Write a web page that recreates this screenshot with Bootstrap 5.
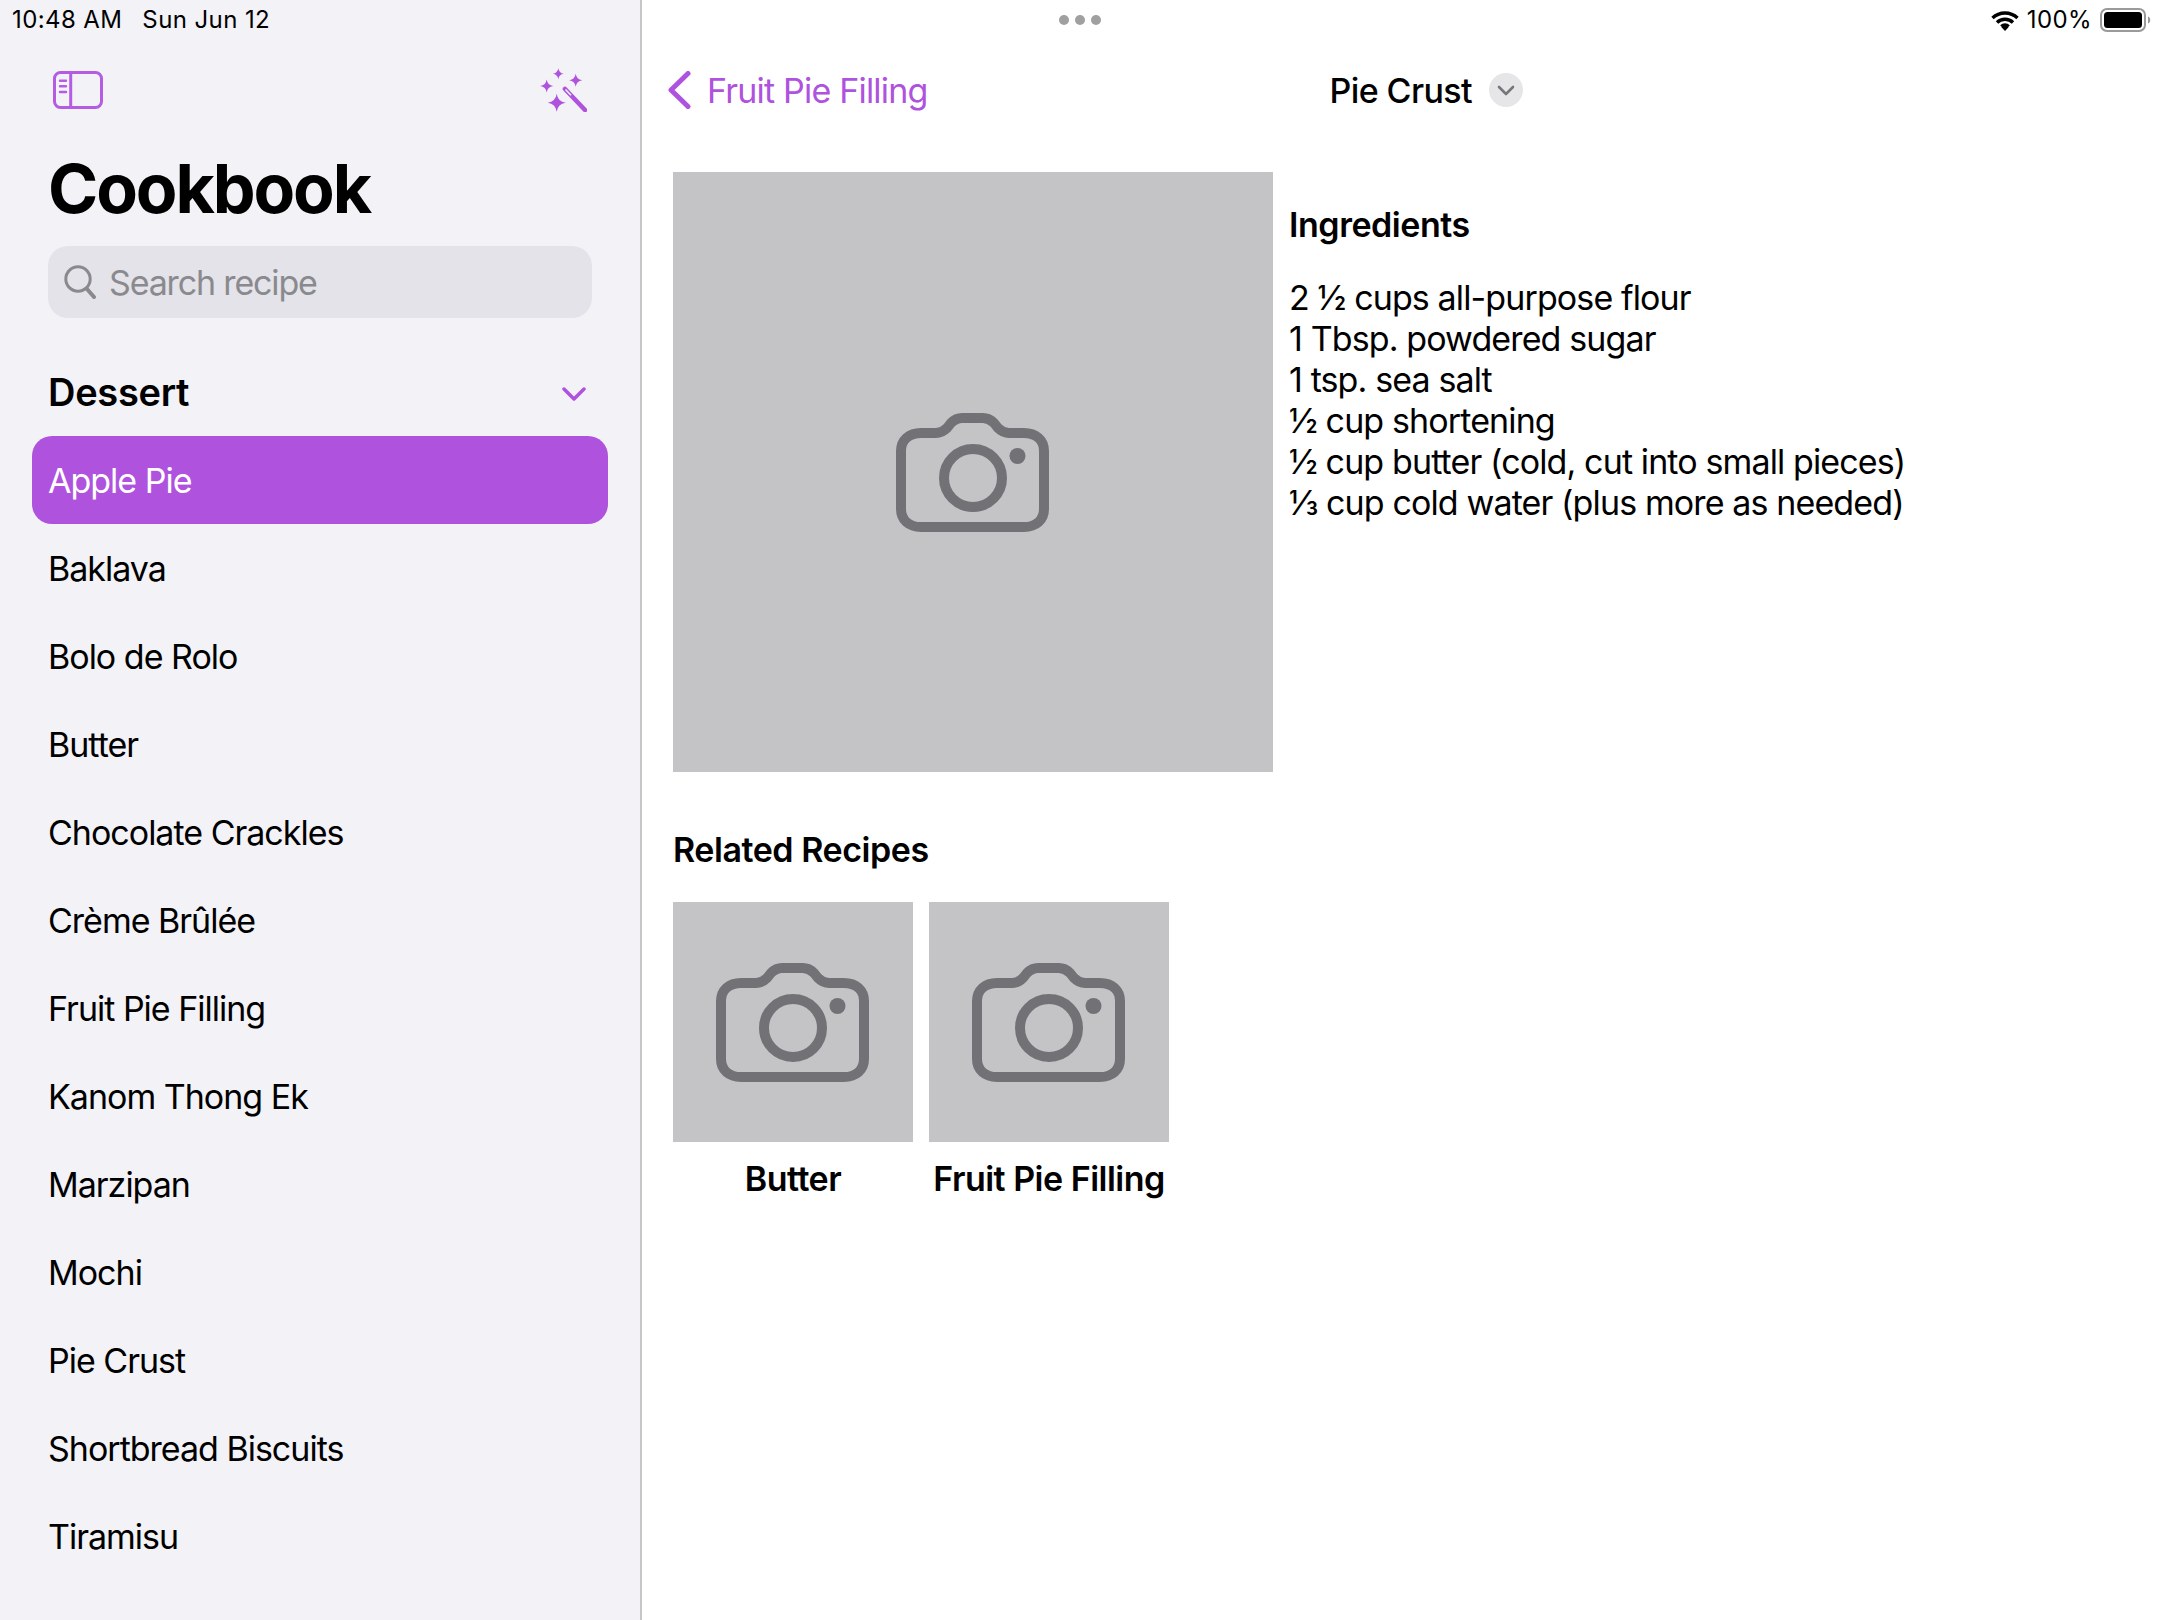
<!DOCTYPE html>
<html lang="en">
<head>
<meta charset="utf-8">
<title>Cookbook</title>
<link href="https://cdn.jsdelivr.net/npm/bootstrap@5.3.0/dist/css/bootstrap.min.css" rel="stylesheet">
<style>
html,body{height:1620px;overflow:hidden;background:#fff}
body{font-family:Inter,"Liberation Sans",sans-serif;color:#000;font-size:34px;line-height:41px;letter-spacing:-.8px}
.ck-side{width:642px;height:1620px;background:#f2f2f7;border-right:2px solid #c6c6c8;flex:none}
.ck-stat{height:40px;font-size:24px;line-height:40px;letter-spacing:.4px}
.ck-time{padding-left:12px;gap:20px}
.ck-tools{height:100px;padding:0 53px}
.ck-title{font-size:68px;line-height:96px;height:106px;font-weight:700;margin:0;padding-left:48px;letter-spacing:-2.1px}
.ck-search{height:72px;margin:0 48px;background:#e3e3e9;border-radius:20px;padding-left:16px;gap:13px;color:#8a8a8e;letter-spacing:-1.15px}
.ck-sect{height:118px;padding:42px 54px 0 48px;align-items:flex-start}
.ck-sect h2{font-size:38px;line-height:64px;margin:0;font-weight:600;letter-spacing:-.3px}
.ck-sect svg{margin-top:27px}
.ck-list{margin:0 32px}
.ck-row{height:88px;background:transparent;border:0;padding:0 16px;display:flex;align-items:center;color:#000;border-radius:20px!important;letter-spacing:-1px}
.ck-row.active{background:#af52de;color:#fff}
.ck-main{min-width:0}
.ck-stat-main{position:relative;padding-right:8px;gap:8px}
.ck-dots{gap:6px;position:absolute;left:417px;top:15px}
.ck-dots i{width:10px;height:10px;border-radius:50%;background:#a0a0a0;display:block}
.ck-nav{height:132px;padding:0 0 32px 26px;color:#af52de}
.ck-back{width:39px}
.ck-navtitle{color:#000;font-weight:500;margin-left:402px;letter-spacing:-.6px}
.ck-disc{width:34px;height:34px;background:#e6e6e8;border-radius:50%;margin-left:17px}
.ck-body{padding-left:31px}
.ck-photo{width:600px;height:600px;background:#c4c4c6;flex:none}
.ck-thumb{width:240px;height:240px;background:#c4c4c6}
.ck-cam{margin-right:1px}
.ck-ingr{padding:32px 0 0 16px}
.ck-h{font-size:34px;line-height:41px;font-weight:600;margin:0;letter-spacing:-.45px}
.ck-lines{margin-top:32px;white-space:nowrap;letter-spacing:-.88px}
.ck-related{height:130px;padding-top:57px}
.ck-tile{width:240px}
.ck-tile-label{font-weight:600;text-align:center;margin-top:16px;white-space:nowrap;letter-spacing:-.5px}
.ck-tiles{gap:16px}
</style>
</head>
<body class="m-0">
<div class="d-flex">
  <aside class="ck-side d-flex flex-column">
    <div class="ck-stat ck-time d-flex"><span>10:48 AM</span><span>Sun Jun 12</span></div>
    <div class="ck-tools d-flex justify-content-between align-items-center">
      <svg width="50" height="40" viewBox="0 0 50 40" fill="none" stroke="#b45ce2" stroke-width="3"><rect x="1.500" y="2.500" width="47" height="35" rx="6"/><path d="M17.700 2.500V37.500"/><path d="M7 10.700h6M7 16.300h6M7 22h6" stroke-width="2.400" stroke-linecap="round"/></svg>
      <svg width="47" height="44" viewBox="0 0 47 44" fill="#af52de"><path d="M18.300 .2Q19 5 23.800 5.700Q19 6.400 18.300 11.200Q17.600 6.400 12.800 5.700Q17.600 5 18.300 .2Z"/><path d="M35.700 5.800Q36.500 11.500 42.200 12.300Q36.500 13.100 35.700 18.800Q34.900 13.100 29.200 12.300Q34.900 11.500 35.700 5.800Z"/><path d="M6.700 11.500Q7.500 17.200 13.200 18Q7.500 18.800 6.700 24.500Q5.900 18.800 .2 18Q5.900 17.200 6.700 11.500Z"/><path d="M16.700 25.700Q17.800 33.600 25.700 34.700Q17.800 35.800 16.700 43.700Q15.600 35.800 7.700 34.700Q15.600 33.600 16.700 25.700Z"/><path d="M25 21L45 42" stroke="#af52de" stroke-width="4.600" stroke-linecap="round"/><path d="M25.500 21.500L31 27.300" stroke="#f2f2f7" stroke-width="1.600"/></svg>
    </div>
    <h1 class="ck-title">Cookbook</h1>
    <div class="ck-search d-flex align-items-center">
      <svg width="32" height="34" viewBox="0 0 32 34" fill="none" stroke="#8a8a8e" stroke-width="3" stroke-linecap="round"><circle cx="14" cy="14" r="12.200"/><path d="M23 24l7 8" stroke-width="4"/></svg>
      <span>Search recipe</span>
    </div>
    <div class="ck-sect d-flex justify-content-between">
      <h2>Dessert</h2>
      <svg width="24" height="14" viewBox="0 0 24 14" fill="none" stroke="#af52de" stroke-width="3.500" stroke-linecap="round" stroke-linejoin="round"><path d="M2 2l10 10L22 2"/></svg>
    </div>
    <div class="ck-list list-group list-group-flush">
      <div class="list-group-item ck-row active">Apple Pie</div>
      <div class="list-group-item ck-row">Baklava</div>
      <div class="list-group-item ck-row">Bolo de Rolo</div>
      <div class="list-group-item ck-row">Butter</div>
      <div class="list-group-item ck-row">Chocolate Crackles</div>
      <div class="list-group-item ck-row">Crème Brûlée</div>
      <div class="list-group-item ck-row">Fruit Pie Filling</div>
      <div class="list-group-item ck-row">Kanom Thong Ek</div>
      <div class="list-group-item ck-row">Marzipan</div>
      <div class="list-group-item ck-row">Mochi</div>
      <div class="list-group-item ck-row">Pie Crust</div>
      <div class="list-group-item ck-row">Shortbread Biscuits</div>
      <div class="list-group-item ck-row">Tiramisu</div>
    </div>
  </aside>
  <main class="ck-main flex-grow-1 d-flex flex-column">
    <div class="ck-stat ck-stat-main d-flex justify-content-end align-items-center">
      <div class="ck-dots d-flex"><i></i><i></i><i></i></div>
      <svg width="28" height="21" viewBox="0 0 28 21" fill="none" stroke="#000" stroke-width="3.400"><path d="M1.500 8a18 18 0 0 1 25 0"/><path d="M6 12.500a11.500 11.500 0 0 1 16 0"/><path d="M10.300 16.500a5.500 5.500 0 0 1 7.400 0"/><path d="M14 21l-3.500-3.800a5 5 0 0 1 7 0z" fill="#000" stroke="none"/></svg>
      <span>100%</span>
      <svg width="52" height="24" viewBox="0 0 52 24"><rect x="1" y="1" width="44" height="22" rx="6" fill="none" stroke="#9a9a9a" stroke-width="2"/><rect x="4" y="4" width="38" height="16" rx="3.500" fill="#000"/><path d="M48 8.500c3 .5 3 6.500 0 7z" fill="#9a9a9a"/></svg>
    </div>
    <div class="ck-nav d-flex align-items-center">
      <svg class="ck-back" width="39" height="38" viewBox="0 0 39 38" fill="none" stroke="#af52de" stroke-width="5" stroke-linecap="round" stroke-linejoin="round"><path d="M20 2.500L3 19l17 16.500"/></svg>
      <span>Fruit Pie Filling</span>
      <span class="ck-navtitle">Pie Crust</span>
      <span class="ck-disc d-flex align-items-center justify-content-center"><svg width="18" height="11" viewBox="0 0 18 11" fill="none" stroke="#77777b" stroke-width="2.600" stroke-linecap="round" stroke-linejoin="round"><path d="M2 2l7 7 7-7"/></svg></span>
    </div>
    <div class="ck-body">
      <div class="d-flex">
        <div class="ck-photo d-flex align-items-center justify-content-center">
          <svg class="ck-cam" width="153" height="119" viewBox="0 0 153 119" fill="none" stroke="#727276" stroke-width="10"><path d="M25 20H40C45 20 48 18 51 15L55 10C58 7 61 5 66 5H87C92 5 95 7 98 10L102 15C105 18 108 20 113 20H128C140 20 148 27 148 38V96C148 107 140 114 128 114H25C13 114 5 107 5 96V38C5 27 13 20 25 20Z"/><circle cx="77" cy="65" r="29"/><circle cx="121.500" cy="43" r="8" fill="#727276" stroke="none"/></svg>
        </div>
        <div class="ck-ingr">
          <h3 class="ck-h">Ingredients</h3>
          <div class="ck-lines">
            <div>2 ½ cups all-purpose flour</div>
            <div>1 Tbsp. powdered sugar</div>
            <div>1 tsp. sea salt</div>
            <div>½ cup shortening</div>
            <div>½ cup butter (cold, cut into small pieces)</div>
            <div>⅓ cup cold water (plus more as needed)</div>
          </div>
        </div>
      </div>
      <div class="ck-related"><h3 class="ck-h">Related Recipes</h3></div>
      <div class="ck-tiles d-flex">
        <div class="ck-tile">
          <div class="ck-thumb d-flex align-items-center justify-content-center">
            <svg class="ck-cam" width="153" height="119" viewBox="0 0 153 119" fill="none" stroke="#727276" stroke-width="10"><path d="M25 20H40C45 20 48 18 51 15L55 10C58 7 61 5 66 5H87C92 5 95 7 98 10L102 15C105 18 108 20 113 20H128C140 20 148 27 148 38V96C148 107 140 114 128 114H25C13 114 5 107 5 96V38C5 27 13 20 25 20Z"/><circle cx="77" cy="65" r="29"/><circle cx="121.500" cy="43" r="8" fill="#727276" stroke="none"/></svg>
          </div>
          <div class="ck-tile-label">Butter</div>
        </div>
        <div class="ck-tile">
          <div class="ck-thumb d-flex align-items-center justify-content-center">
            <svg class="ck-cam" width="153" height="119" viewBox="0 0 153 119" fill="none" stroke="#727276" stroke-width="10"><path d="M25 20H40C45 20 48 18 51 15L55 10C58 7 61 5 66 5H87C92 5 95 7 98 10L102 15C105 18 108 20 113 20H128C140 20 148 27 148 38V96C148 107 140 114 128 114H25C13 114 5 107 5 96V38C5 27 13 20 25 20Z"/><circle cx="77" cy="65" r="29"/><circle cx="121.500" cy="43" r="8" fill="#727276" stroke="none"/></svg>
          </div>
          <div class="ck-tile-label">Fruit Pie Filling</div>
        </div>
      </div>
    </div>
  </main>
</div>
<script src="https://cdn.jsdelivr.net/npm/bootstrap@5.3.0/dist/js/bootstrap.bundle.min.js"></script>
</body>
</html>
